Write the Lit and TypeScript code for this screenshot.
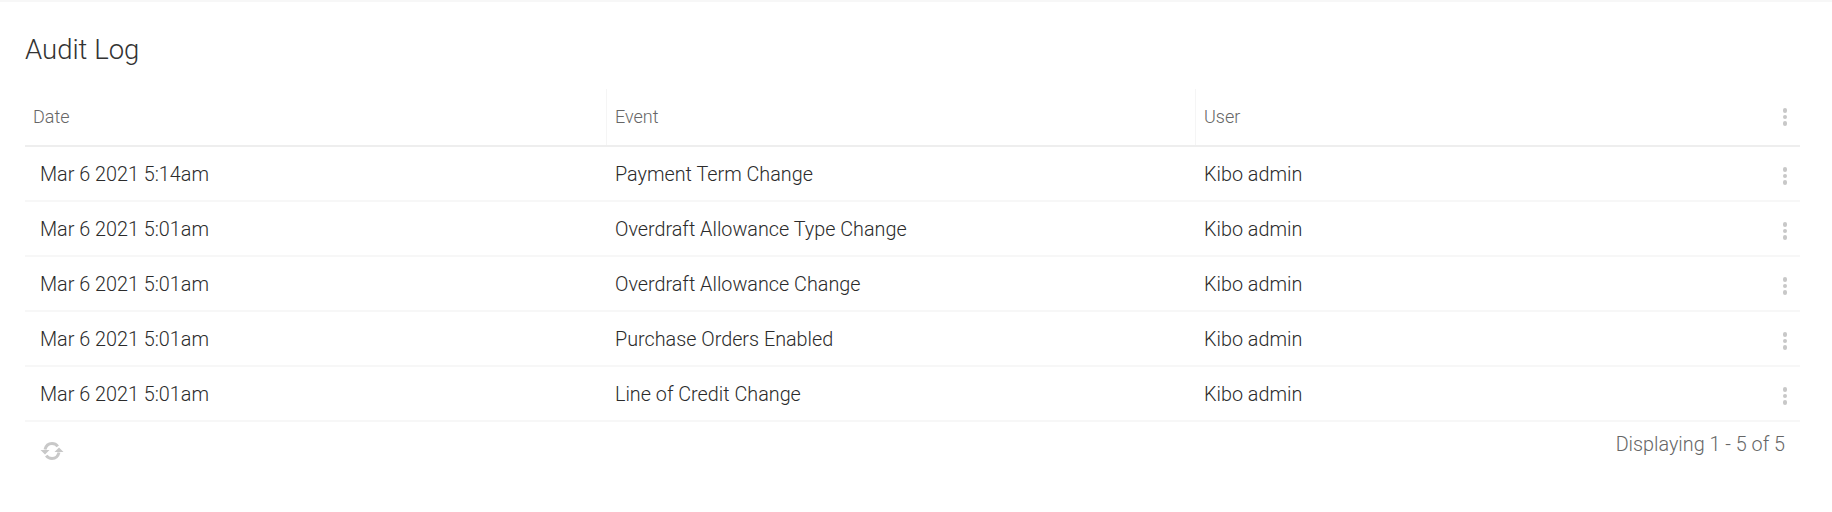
import { LitElement, html, css, svg } from "lit";
import { customElement } from "lit/decorators.js";

const rows = [
  ["Mar 6 2021 5:14am", "Payment Term Change", "Kibo admin"],
  ["Mar 6 2021 5:01am", "Overdraft Allowance Type Change", "Kibo admin"],
  ["Mar 6 2021 5:01am", "Overdraft Allowance Change", "Kibo admin"],
  ["Mar 6 2021 5:01am", "Purchase Orders Enabled", "Kibo admin"],
  ["Mar 6 2021 5:01am", "Line of Credit Change", "Kibo admin"],
];

const kebab = html`<span class="kebab"><i></i><i></i><i></i></span>`;

const sync = svg`<svg class="sync" viewBox="0 0 24 24" width="24" height="24" fill="none">
  <path d="M5 10.500C6 6.500 8.700 4.500 12 4.500c2.400 0 4.400 1 5.800 2.800" stroke="currentColor" stroke-width="3"/>
  <path d="M19 13.500C18 17.500 15.300 19.500 12 19.500c-2.400 0-4.400-1-5.800-2.800" stroke="currentColor" stroke-width="3"/>
  <path d="M0.500 11H9.500L5 15.500Z" fill="currentColor"/>
  <path d="M14.500 13H23.500L19 8.500Z" fill="currentColor"/>
</svg>`;

@customElement("app-root")
export class AppRoot extends LitElement {
  static styles = css`
    :host {
      display: block;
      height: 512px;
      box-sizing: border-box;
      padding: 0 32px 0 25px;
      border-top: 2px solid #f7f7f7;
      background: #fff;
      font-family: Roboto, "Liberation Sans", sans-serif;
      color: #333333;
    }
    h1 {
      margin: 0;
      padding-top: 30px;
      height: 57px;
      box-sizing: content-box;
      font-size: 27.500px;
      line-height: 36px;
      font-weight: 300;
      color: #333333;
    }
    .row {
      display: grid;
      grid-template-columns: 582px 589px 1fr 30px;
      align-items: stretch;
    }
    .head {
      height: 58px;
      box-sizing: border-box;
      border-bottom: 2px solid #eeeeee;
      font-size: 18px;
      font-weight: 300;
      color: #666666;
    }
    .head .cell {
      border-right: 1px solid #f5f5f5;
      padding: 0 0 2px 8px;
      display: flex;
      align-items: center;
    }
    .head .cell:nth-child(3) {
      border-right: none;
    }
    .body-row {
      height: 55px;
      box-sizing: border-box;
      border-bottom: 2px solid #f7f7f7;
      font-size: 19.800px;
      font-weight: 300;
      color: #2b2b2b;
    }
    .body-row .cell {
      display: flex;
      align-items: center;
      padding-left: 8px;
      padding-top: 1px;
    }
    .body-row .cell:first-child {
      padding-left: 15px;
    }
    .menu {
      display: flex;
      align-items: center;
      justify-content: center;
      padding-top: 5px;
    }
    .head .menu {
      padding-top: 0;
    }
    .kebab {
      display: flex;
      flex-direction: column;
      gap: 2.200px;
    }
    .kebab i {
      display: block;
      width: 4.500px;
      height: 4.500px;
      border-radius: 50%;
      background: #c8c8c8;
    }
    .foot {
      display: flex;
      justify-content: space-between;
      align-items: flex-start;
      padding: 10px 15px 0 15px;
    }
    .sync {
      display: block;
      color: #c8c8c8;
      margin-top: 7px;
    }
    .count {
      font-size: 19.800px;
      font-weight: 300;
      line-height: 26px;
      color: #666666;
    }
  `;

  render() {
    return html`
      <h1>Audit Log</h1>
      <div class="row head">
        <div class="cell">Date</div>
        <div class="cell">Event</div>
        <div class="cell">User</div>
        <div class="menu">${kebab}</div>
      </div>
      ${rows.map(
        (r) => html`<div class="row body-row">
          <div class="cell">${r[0]}</div>
          <div class="cell">${r[1]}</div>
          <div class="cell">${r[2]}</div>
          <div class="menu">${kebab}</div>
        </div>`
      )}
      <div class="foot">
        ${sync}
        <div class="count">Displaying 1 - 5 of 5</div>
      </div>
    `;
  }
}
